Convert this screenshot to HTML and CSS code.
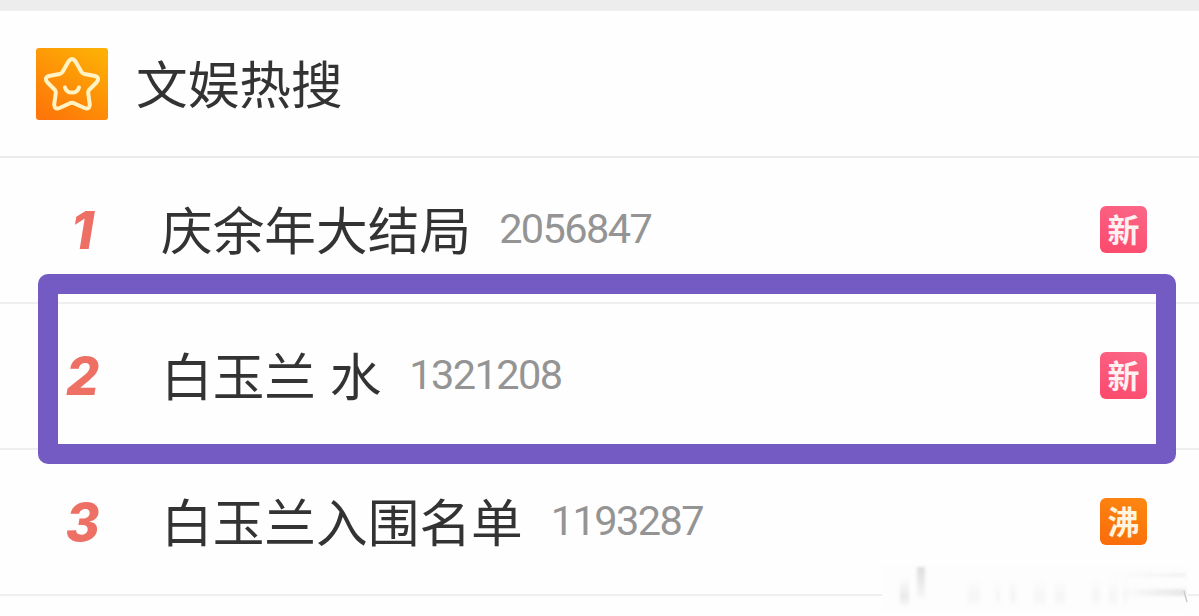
FILE: index.html
```html
<!DOCTYPE html>
<html lang="zh-CN">
<head>
    <meta charset="UTF-8">
    <meta name="viewport" content="width=device-width, initial-scale=1.0">
    <title>文娱热搜</title>
    <link rel="stylesheet" href="styles.css">
</head>
<body>

    <div class="top-strip"></div>

    <header class="board-header">
        <svg class="board-icon" viewBox="0 0 72 72">
            <defs>
                <linearGradient id="orange" x1="0.2" y1="1" x2="0.8" y2="0">
                    <stop offset="0" stop-color="#fd7609"/>
                    <stop offset="1" stop-color="#fdaf05"/>
                </linearGradient>
            </defs>
            <rect width="72" height="72" rx="3" fill="url(#orange)"/>
            <g fill="none" stroke="#fff3c4" stroke-width="4" stroke-linecap="round" stroke-linejoin="round">
                <path d="M32.5 13.5Q36 8.500 39.500 13.500L45.500 24Q46.500 25.500 48.500 26L59 28Q64.500 30 60.500 34.500L53 42Q52 43.500 52.200 45L53.800 56.500Q53.500 62 48.500 60L38 55.200Q36 54.400 34 55.200L23.500 60Q18.500 62 18.200 56.500L19.800 45Q20 43.500 19 42L11.500 34.500Q7.500 30 13 28L23.500 26Q25.500 25.500 26.500 24Z"/>
                <path d="M29 39.500C31 46.300 41 46.300 43 39.500"/>
            </g>
        </svg>
        <h1>文娱热搜</h1>
    </header>

    <main class="hot-list">
        <div class="hot-item">
            <span class="rank">1</span>
            <span class="title">庆余年大结局</span>
            <span class="count">2056847</span>
            <span class="tag tag-new">新</span>
        </div>
        <div class="hot-item marked">
            <span class="rank">2</span>
            <span class="title">白玉兰 水</span>
            <span class="count">1321208</span>
            <span class="tag tag-new">新</span>
        </div>
        <div class="hot-item">
            <span class="rank">3</span>
            <span class="title">白玉兰入围名单</span>
            <span class="count">1193287</span>
            <span class="tag tag-boil">沸</span>
            <!-- Faded smudge over the last divider -->
            <svg class="smudge" viewBox="0 0 306 46">
                <defs>
                    <linearGradient id="fade" x1="0" y1="0" x2="0" y2="1">
                        <stop offset="0" stop-color="#777" stop-opacity="0"/>
                        <stop offset="0.7" stop-color="#777" stop-opacity="0.8"/>
                        <stop offset="1" stop-color="#777" stop-opacity="0.3"/>
                    </linearGradient>
                    <linearGradient id="fade-down" x1="0" y1="0" x2="0" y2="1">
                        <stop offset="0" stop-color="#777" stop-opacity="0.24"/>
                        <stop offset="1" stop-color="#777" stop-opacity="0.03"/>
                    </linearGradient>
                    <linearGradient id="fade-right" x1="0" y1="0" x2="1" y2="0">
                        <stop offset="0" stop-color="#888" stop-opacity="0"/>
                        <stop offset="1" stop-color="#888" stop-opacity="0.28"/>
                    </linearGradient>
                    <filter id="soft"><feGaussianBlur stdDeviation="1.6"/></filter>
                </defs>
                <rect width="306" height="46" fill="#fdfdfd"/>
                <g filter="url(#soft)">
                    <rect x="35" y="2" width="8" height="32" fill="url(#fade-down)"/>
                    <g fill="url(#fade)">
                        <rect x="18" y="12" width="9" height="28" opacity="0.18"/>
                        <rect x="86" y="14" width="12" height="26" opacity="0.07"/>
                        <rect x="113" y="14" width="6" height="26" opacity="0.05"/>
                        <rect x="128" y="14" width="6" height="26" opacity="0.08"/>
                        <rect x="152" y="14" width="11" height="26" opacity="0.07"/>
                        <rect x="173" y="14" width="10" height="26" opacity="0.07"/>
                        <rect x="210" y="14" width="8" height="26" opacity="0.07"/>
                        <rect x="227" y="14" width="8" height="26" opacity="0.07"/>
                        <rect x="241" y="14" width="5" height="26" opacity="0.06"/>
                    </g>
                    <rect x="228" y="8" width="76" height="4" fill="url(#fade-right)" opacity="0.35"/>
                    <rect x="238" y="24" width="66" height="7" fill="url(#fade-right)" opacity="0.7"/>
                </g>
                <path d="M302 26L305 37" stroke="#ccc" stroke-width="1.500"/>
            </svg>
        </div>
    </main>

</body>
</html>
```
FILE: styles.css
```css
*, *::after {
    box-sizing: border-box;
}
body {
    margin: 0;
    height: 616px;
    background-color: #fefefe;
    color: #333;
    font-family: "Noto Sans CJK SC", sans-serif;
}
.top-strip {
    height: 11px;
    background-color: #ededed;
}
/* Header */
.board-header {
    display: flex;
    align-items: center;
    height: 147px;
    padding-left: 36px;
    border-bottom: 2px solid #ebebeb;
}
.board-icon {
    width: 72px;
    height: 72px;
}
h1 {
    margin: 0 0 0 28px;
    padding-bottom: 4px;
    font-size: 51.7px;
    font-weight: 400;
    line-height: 72px;
}
/* List rows */
.hot-item {
    position: relative;
    display: flex;
    align-items: center;
    height: 146px;
    padding: 0 52px 1px 60px;
    border-bottom: 2px solid #efefef;
}
.rank {
    width: 45px;
    margin-right: 56px;
    padding-top: 1px;
    color: #ee6f63;
    font-family: Inter, sans-serif;
    font-size: 52px;
    font-style: italic;
    font-weight: 800;
    text-align: center;
}
.title {
    padding-bottom: 3px;
    font-size: 51.7px;
    line-height: 72px;
    white-space: nowrap;
    word-spacing: 2px;
}
.count {
    margin-left: 28px;
    padding-bottom: 3px;
    color: #949494;
    font-family: Roboto, sans-serif;
    font-size: 41.5px;
    font-weight: 400;
    letter-spacing: -1.6px;
}
.tag {
    width: 47px;
    height: 47px;
    margin-left: auto;
    border-radius: 6px;
    color: #fff0f2;
    font-size: 32px;
    font-weight: 700;
    line-height: 45px;
    text-align: center;
}
.tag-new {
    background: linear-gradient(20deg, #fb496b, #fb6788);
}
.tag-boil {
    background: linear-gradient(20deg, #f86b0c, #fd8810);
    color: #fff4de;
}
/* Hand-marked frame around the row */
.marked::after {
    content: "";
    position: absolute;
    top: -30px;
    left: 38px;
    width: 1138px;
    height: 190px;
    border: 20px solid #745ac3;
    border-radius: 10px;
    z-index: 1;
}
.smudge {
    position: absolute;
    left: 882px;
    top: 115px;
    width: 306px;
    height: 46px;
}
```
